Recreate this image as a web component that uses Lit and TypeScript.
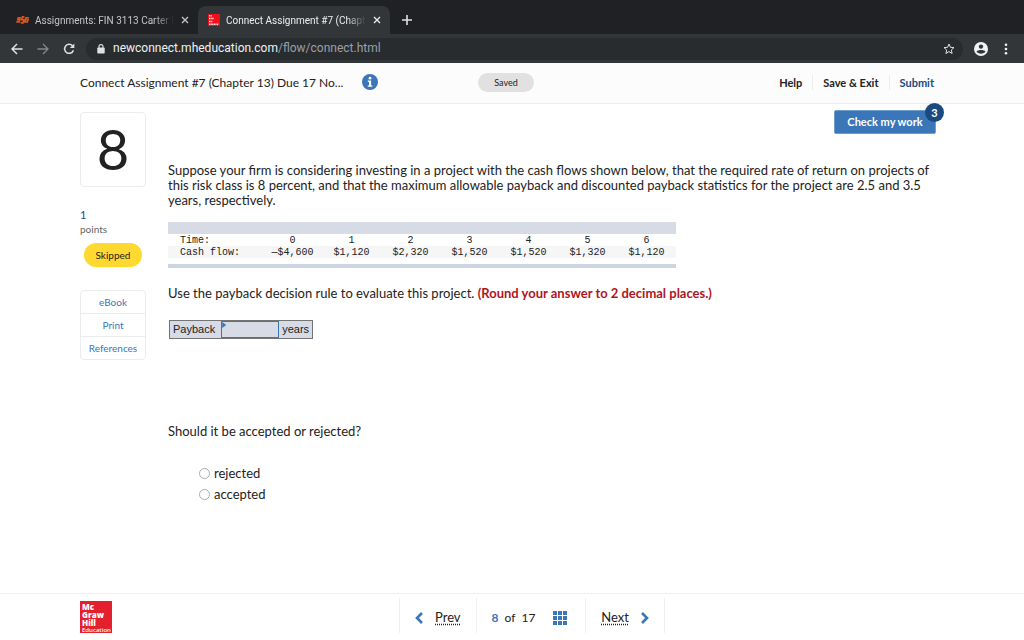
import { LitElement, html, css } from "lit";
import { customElement, state } from "lit/decorators.js";

const FLOWS = [
  { time: "0", cash: "—$4,600" },
  { time: "1", cash: "$1,120" },
  { time: "2", cash: "$2,320" },
  { time: "3", cash: "$1,520" },
  { time: "4", cash: "$1,520" },
  { time: "5", cash: "$1,320" },
  { time: "6", cash: "$1,120" },
];

@customElement("browser-bar")
class BrowserBar extends LitElement {
  static styles = css`
    :host {
      display: block;
      font-family: Roboto, "Liberation Sans", sans-serif;
      background: #202124;
      color: #dfe1e5;
    }
    * { box-sizing: border-box; }
    button {
      display: flex;
      align-items: center;
      justify-content: center;
      padding: 0;
      border: 0;
      background: none;
      color: inherit;
      font: inherit;
    }
    svg { display: block; }
    .tabs {
      display: flex;
      align-items: flex-end;
      height: 34px;
    }
    .tab {
      display: flex;
      align-items: center;
      height: 28px;
      padding: 0 9px 0 10px;
      border-radius: 8px 8px 0 0;
      width: 192px;
      font-size: 10px;
      color: #c3c6ca;
    }
    .tab.first { margin-left: 6px; }
    .tab.active { background: #323639; color: #eceef0; }
    .title {
      flex: 1;
      min-width: 0;
      margin: 0 7px 0 6px;
      overflow: hidden;
      white-space: nowrap;
      -webkit-mask-image: linear-gradient(90deg, #000 86%, transparent);
      mask-image: linear-gradient(90deg, #000 86%, transparent);
    }
    .plus { width: 14px; height: 28px; margin-left: 10px; }
    .tools {
      display: flex;
      align-items: center;
      height: 29px;
      padding: 0 12px 0 11px;
      background: #323639;
    }
    .tools .nav { width: 12px; margin-right: 14px; }
    .dim { color: #84888c; }
    .address {
      display: flex;
      align-items: center;
      flex: 1;
      height: 22px;
      margin: 0 11px 0 -3px;
      padding: 0 8px 0 11px;
      border-radius: 11px;
      background: #282c2f;
    }
    .url {
      flex: 1;
      margin: 0 8px;
      font-size: 12px;
      color: #9aa0a6;
      white-space: nowrap;
    }
    .url b { font-weight: 400; color: #f0f1f2; }
    .menu { width: 12px; margin-left: 12px; }
  `;

  private close() {
    return html`<svg width="8" height="8" viewBox="0 0 8 8" fill="none" stroke="currentColor" stroke-width="1.3"><path d="M1 1l6 6M7 1l-6 6" /></svg>`;
  }

  render() {
    return html`
      <div class="tabs">
        <div class="tab first">
          <svg width="13" height="8" viewBox="0 0 13 8" fill="none" stroke="#d9541e" stroke-width="1.7">
            <path d="M4.800 1.800H2.300L1.800 3.600H3.800L3.200 5.900H.3M8.400 .9H6.400L5.700 3.600H7.700L7 6.900H4.700M12.800 1.800H10L8.900 5.900H11.300L12 3.800H10.600" />
          </svg>
          <span class="title">Assignments: FIN 3113 Carter Fall</span>
          <button aria-label="Close tab">${this.close()}</button>
        </div>
        <div class="tab active">
          <svg width="12" height="12" viewBox="0 0 12 12">
            <rect width="12" height="12" fill="#f0101c" />
            <path d="M1 1.700h3M1 4.600h5M1 7.400h3.500M1 10.300h9.500" stroke="#fff" stroke-width="1.500" stroke-dasharray="1.2 .4" opacity=".85" />
          </svg>
          <span class="title">Connect Assignment #7 (Chapter 13)</span>
          <button aria-label="Close tab">${this.close()}</button>
        </div>
        <button class="plus" aria-label="New tab">
          <svg width="10" height="10" viewBox="0 0 10 10" stroke="currentColor" stroke-width="1.6"><path d="M5 0v10M0 5h10" /></svg>
        </button>
      </div>
      <div class="tools">
        <button class="nav" aria-label="Back">
          <svg width="12" height="12" viewBox="0 0 12 12" fill="none" stroke="currentColor" stroke-width="1.5"><path d="M11.500 6H1.500M6 1L1 6l5 5" /></svg>
        </button>
        <button class="nav dim" aria-label="Forward">
          <svg width="12" height="12" viewBox="0 0 12 12" fill="none" stroke="currentColor" stroke-width="1.3"><path d="M.5 6h10M6 1l5 5-5 5" /></svg>
        </button>
        <button class="nav" aria-label="Reload">
          <svg width="12" height="12" viewBox="0 0 12 12"><path d="M9.600 3A4.500 4.500 0 1 0 10.400 7.200" fill="none" stroke="currentColor" stroke-width="1.5" /><path d="M11.300.6V5H6.900z" fill="currentColor" /></svg>
        </button>
        <div class="address">
          <svg width="8" height="10" viewBox="0 0 8 10"><rect y="3.500" x=".3" width="7.400" height="6" rx=".8" fill="currentColor" /><path d="M2 4V2.600a2 2 0 0 1 4 0V4" fill="none" stroke="currentColor" stroke-width="1.1" /></svg>
          <span class="url"><b>newconnect.mheducation.com</b>/flow/connect.html</span>
          <button aria-label="Bookmark">
            <svg width="12" height="12" viewBox="0 0 12 12" fill="none" stroke="currentColor" stroke-width="1"><path d="M6 1l1.400 3.300 3.600.3-2.700 2.400.8 3.500L6 8.600l-3.100 1.900.8-3.500L1 4.600l3.600-.3z" /></svg>
          </button>
        </div>
        <button aria-label="Profile">
          <svg width="14" height="14" viewBox="0 0 14 14"><circle cx="7" cy="7" r="7" fill="#f1f3f4" /><circle cx="7" cy="4.600" r="2.200" fill="#323639" /><path d="M2.500 9.600C4 7.600 10 7.600 11.500 9.600 10 12.300 4 12.300 2.500 9.600z" fill="#323639" /></svg>
        </button>
        <button class="menu" aria-label="Menu">
          <svg width="4" height="12" viewBox="0 0 4 12" fill="#f1f3f4"><circle cx="2" cy="1.700" r="1.300" /><circle cx="2" cy="6" r="1.300" /><circle cx="2" cy="10.300" r="1.300" /></svg>
        </button>
      </div>
    `;
  }
}

@customElement("app-root")
class AppRoot extends LitElement {
  @state() private choice = "";

  static styles = css`
    :host {
      display: flex;
      flex-direction: column;
      min-height: 100vh;
      background: #fff;
      color: #222;
      font-family: Lato, "Open Sans", sans-serif;
      font-size: 13px;
      line-height: 15px;
    }
    * { box-sizing: border-box; }
    button, input { font: inherit; color: inherit; margin: 0; }
    a { color: inherit; text-decoration: none; }
    p { margin: 0; }
    svg { display: block; }
    .top {
      display: flex;
      align-items: center;
      height: 41px;
      padding: 0 80px 2px;
      background: #fcfcfc;
      border-bottom: 1px solid #ececec;
    }
    .name { width: 273px; margin: 0; font-size: 12px; font-weight: 400; white-space: nowrap; }
    .info { padding: 0; border: 0; background: none; margin-left: 9px; }
    .saved {
      margin-left: 100px;
      width: 56px;
      height: 19px;
      line-height: 19px;
      border-radius: 10px;
      background: #e1e1e1;
      text-align: center;
      font-size: 9px;
    }
    .actions {
      display: flex;
      margin-left: auto;
      font-size: 11px;
      font-weight: 700;
    }
    .actions a { padding: 0 10px; border-left: 1px solid #ececec; }
    .actions a:first-child { border-left: 0; }
    .actions .submit { color: #1a4a80; }
    .body {
      display: flex;
      flex: 1;
      padding: 0 88px 0 80px;
    }
    .side { width: 66px; margin: 8px 22px 0 0; }
    .number {
      height: 75px;
      border: 1px solid #ececec;
      border-radius: 4px;
      text-align: center;
      font-size: 56px;
      line-height: 71px;
    }
    .points { margin-top: 21px; font-size: 10px; line-height: 14px; color: #666; }
    .points b { display: block; font-size: 11px; font-weight: 400; color: #1a4a80; }
    .skipped {
      margin: 7px 4px 0;
      height: 24px;
      border-radius: 12px;
      background: #ffd92f;
      text-align: center;
      font-size: 10px;
      line-height: 24px;
    }
    .links {
      margin-top: 23px;
      border: 1px solid #ececec;
      border-radius: 4px;
      color: #3b76b8;
      font-size: 10px;
      text-align: center;
    }
    .links a { display: block; line-height: 22px; }
    .links a + a { border-top: 1px solid #ececec; }
    .main { flex: 1; min-width: 0; padding-top: 6px; }
    .check-row { display: flex; justify-content: flex-end; }
    .check {
      position: relative;
      width: 102px;
      height: 24px;
      padding: 0 0 2px;
      border: 1px solid #6f9dce;
      border-radius: 2px;
      background: #3b76b8;
      color: #fff;
      font-size: 11px;
      font-weight: 700;
    }
    .badge {
      position: absolute;
      top: -8px;
      right: -9px;
      width: 19px;
      height: 19px;
      border-radius: 10px;
      background: #1a4a80;
      line-height: 19px;
    }
    .lead { margin-top: 29px; }
    .flows {
      width: 508px;
      margin-top: 14px;
      border-collapse: separate;
      border-spacing: 0;
      border-top: 12px solid #d6dbe6;
      border-bottom: 4px solid #cdd4e2;
      table-layout: fixed;
      font-family: "Liberation Mono", monospace;
      font-size: 10px;
      line-height: 10px;
    }
    .flows th, .flows td { padding: 2px 0 0; font-weight: 400; text-align: center; white-space: nowrap; }
    .flows th[scope="row"] { width: 95px; padding-left: 12px; text-align: left; }
    .flows .cash th, .flows .cash td { background: #f6f6f6; }
    .flows .rest td { height: 6px; }
    .prompt { margin-top: 18px; }
    .prompt strong { color: #b0151d; }
    .answer {
      display: inline-flex;
      align-items: stretch;
      height: 19px;
      margin: 19px 0 0 1px;
      border: 1px solid #747474;
      background: #d6dbe6;
      font-family: "Liberation Sans", sans-serif;
      font-size: 11px;
      line-height: 17px;
    }
    .answer label { padding: 0 6px 0 3px; }
    .answer span { padding: 0 3px; }
    .entry { position: relative; display: flex; }
    .cell {
      width: 58px;
      padding: 0 6px;
      border: 1px solid #3b76b8;
      border-radius: 0;
      background: #d6dbe6;
      outline: none;
    }
    .mark {
      position: absolute;
      top: 1px;
      left: 1px;
      width: 4px;
      height: 6px;
      background: #3b76b8;
      clip-path: polygon(0 0, 100% 50%, 0 100%);
    }
    .ask { margin-top: 85px; }
    .options { display: grid; gap: 6px; margin: 27px 0 0 31px; padding: 0; border: 0; }
    .options label { display: flex; align-items: center; }
    .options input {
      appearance: none;
      width: 11px;
      height: 11px;
      margin-right: 4px;
      border: 1px solid #aaa;
      border-radius: 6px;
      background: #fff;
    }
    .options input:checked { background: radial-gradient(#3b76b8 3px, #fff 4px); }
    .foot {
      display: grid;
      grid-template-columns: auto 1fr;
      column-gap: 8px;
      height: 47px;
      padding: 4px 80px 8px;
      border-top: 1px solid #f0f0f0;
    }
    .logo {
      width: 32px;
      height: 32px;
      margin-top: 3px;
      padding: 2px 0 0 2px;
      background: #e4202e;
      color: #fff;
      font-family: "Open Sans", sans-serif;
      font-size: 8px;
      font-weight: 800;
      line-height: 8px;
    }
    .logo span { display: block; }
    .logo .edu { font-size: 6px; font-weight: 600; line-height: 6px; }
    .pager {
      display: flex;
      justify-self: center;
      border: 1px solid #efefef;
      border-width: 0 1px;
      font-size: 12px;
    }
    .pager > * {
      display: flex;
      align-items: center;
      gap: 12px;
      padding: 4px 15px 0;
      border: 0;
      background: none;
    }
    .pager > * + * { border-left: 1px solid #efefef; }
    .pager .word { font-size: 13px; text-decoration: underline dotted; text-underline-offset: 2px; }
    .pager .pos { gap: 6px; padding-right: 18px; }
    .pager .pos b { color: #3b76b8; }
    .pager .pos button { padding: 0; border: 0; background: none; margin-left: 12px; }
  `;

  render() {
    return html`
      <browser-bar></browser-bar>
      <header class="top">
        <h1 class="name">Connect Assignment #7 (Chapter 13) Due 17 No...</h1>
        <button class="info" aria-label="Assignment information">
          <svg width="16" height="16" viewBox="0 0 16 16"><circle cx="8" cy="8" r="8" fill="#3b76b8" /><circle cx="8" cy="4.200" r="1.400" fill="#fff" /><path d="M5.800 6.600H9.100V11.400H10.300V12.700H5.800V11.400H7V7.900H5.800z" fill="#fff" /></svg>
        </button>
        <span class="saved">Saved</span>
        <nav class="actions">
          <a href="#help">Help</a><a href="#exit">Save &amp; Exit</a><a class="submit" href="#submit">Submit</a>
        </nav>
      </header>
      <main class="body">
        <aside class="side">
          <div class="number">8</div>
          <div class="points"><b>1</b>points</div>
          <div class="skipped">Skipped</div>
          <nav class="links">
            <a href="#ebook">eBook</a><a href="#print">Print</a><a href="#references">References</a>
          </nav>
        </aside>
        <section class="main">
          <div class="check-row">
            <button class="check">Check my work<span class="badge">3</span></button>
          </div>
          <p class="lead">
            Suppose your firm is considering investing in a project with the cash flows shown below, that the required rate of return on projects of<br />
            this risk class is 8 percent, and that the maximum allowable payback and discounted payback statistics for the project are 2.5 and 3.5<br />
            years, respectively.
          </p>
          <table class="flows">
            <tbody>
              <tr><th scope="row">Time:</th>${FLOWS.map((f) => html`<td>${f.time}</td>`)}</tr>
              <tr class="cash"><th scope="row">Cash flow:</th>${FLOWS.map((f) => html`<td>${f.cash}</td>`)}</tr>
              <tr class="rest"><td colspan="8"></td></tr>
            </tbody>
          </table>
          <p class="prompt">
            Use the payback decision rule to evaluate this project. <strong>(Round your answer to 2 decimal places.)</strong>
          </p>
          <div class="answer">
            <label for="payback">Payback</label>
            <div class="entry"><input class="cell" id="payback" type="text" /><i class="mark"></i></div>
            <span>years</span>
          </div>
          <p class="ask" id="ask">Should it be accepted or rejected?</p>
          <fieldset class="options" aria-labelledby="ask">
            ${["rejected", "accepted"].map(
              (o) => html`<label><input type="radio" name="decision" .checked=${this.choice === o} @change=${() => (this.choice = o)} />${o}</label>`
            )}
          </fieldset>
        </section>
      </main>
      <footer class="foot">
        <div class="logo"><span>Mc</span><span>Graw</span><span>Hill</span><span class="edu">Education</span></div>
        <nav class="pager">
          <button>
            <svg width="8" height="12" viewBox="0 0 8 12" fill="none" stroke="#3b76b8" stroke-width="2.600"><path d="M7 1L2 6l5 5" /></svg>
            <span class="word">Prev</span>
          </button>
          <div class="pos">
            <b>8</b><span>of</span><span>17</span>
            <button aria-label="All questions">
              <svg width="14" height="14" viewBox="0 0 14 14" fill="#3b76b8"><path d="M0 0h4v4H0zM5 0h4v4H5zM10 0h4v4h-4zM0 5h4v4H0zM5 5h4v4H5zM10 5h4v4h-4zM0 10h4v4H0zM5 10h4v4H5zM10 10h4v4h-4z" /></svg>
            </button>
          </div>
          <button>
            <span class="word">Next</span>
            <svg width="8" height="12" viewBox="0 0 8 12" fill="none" stroke="#3b76b8" stroke-width="2.600"><path d="M1 1l5 5-5 5" /></svg>
          </button>
        </nav>
      </footer>
    `;
  }
}
